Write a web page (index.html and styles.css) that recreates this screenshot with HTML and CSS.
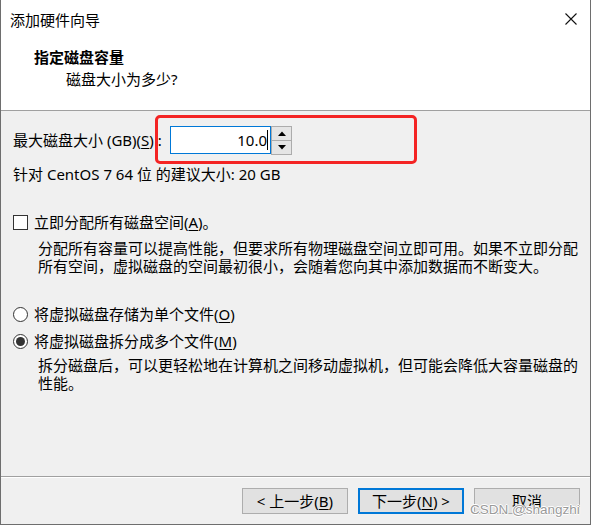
FILE: index.html
```html
<!DOCTYPE html>
<html lang="zh-CN">
<head>
<meta charset="utf-8">
<title>添加硬件向导</title>
<link rel="stylesheet" href="styles.css">
</head>
<body>
<div class="window">
  <div class="header">
    <div class="titlebar">
      <span class="title">添加硬件向导</span>
      <svg class="close" width="12" height="12" viewBox="0 0 12 12"><path d="M0.5 0.5 L11.5 11.5 M11.5 0.5 L0.5 11.5" stroke="#111" stroke-width="1.1" fill="none"/></svg>
    </div>
    <div class="heading">指定磁盘容量</div>
    <div class="subheading">磁盘大小为多少?</div>
  </div>

  <div class="content">
    <div class="size-row">
      <span class="size-label">最大磁盘大小 (GB)(<u>S</u>) :</span>
      <div class="spin-input">
        <span class="value">10.0</span><span class="caret"></span>
      </div>
      <div class="spinner">
        <div class="spin-btn"><svg width="8" height="5" viewBox="0 0 8 5"><path d="M0 5 L4 0.5 L8 5 Z" fill="#000"/></svg></div>
        <div class="spin-btn"><svg width="8" height="5" viewBox="0 0 8 5"><path d="M0 0 L4 4.5 L8 0 Z" fill="#000"/></svg></div>
      </div>
      <div class="highlight"></div>
    </div>

    <div class="recommend">针对 CentOS 7 64 位 的建议大小: 20 GB</div>

    <div class="option option-check">
      <span class="checkbox"></span>
      <span>立即分配所有磁盘空间(<u>A</u>)。</span>
    </div>
    <div class="desc desc-first">分配所有容量可以提高性能，但要求所有物理磁盘空间立即可用。如果不立即分配<br>所有空间，虚拟磁盘的空间最初很小，会随着您向其中添加数据而不断变大。</div>

    <div class="option option-radio1">
      <span class="radio"></span>
      <span>将虚拟磁盘存储为单个文件(<u>O</u>)</span>
    </div>
    <div class="option option-radio2">
      <span class="radio checked"></span>
      <span>将虚拟磁盘拆分成多个文件(<u>M</u>)</span>
    </div>
    <div class="desc desc-second">拆分磁盘后，可以更轻松地在计算机之间移动虚拟机，但可能会降低大容量磁盘的<br>性能。</div>
  </div>

  <div class="footer">
    <button class="btn">&lt; 上一步(<u>B</u>)</button>
    <button class="btn btn-default">下一步(<u>N</u>) &gt;</button>
    <button class="btn">取消</button>
    <span class="watermark">CSDN @shangzhi</span>
  </div>
</div>
</body>
</html>
```
FILE: styles.css
```css
* { box-sizing: border-box; }

html, body {
  margin: 0;
  padding: 0;
  background: #ffffff;
}

body {
  font-family: "Noto Sans", "Noto Sans CJK SC", sans-serif;
  font-size: 15px;
  color: #000;
}

u { text-decoration: underline; text-underline-offset: 2px; }

.window {
  width: 591px;
  height: 525px;
  border-left: 1px solid #6e6e6e;
  border-right: 1px solid #6e6e6e;
  border-bottom: 1px solid #6e6e6e;
  background: #f0f0f0;
  display: flex;
  flex-direction: column;
}

.header {
  height: 111px;
  background: #ffffff;
  border-bottom: 1px solid #a0a0a0;
  flex: none;
}

.titlebar {
  height: 39px;
  display: flex;
  align-items: center;
  justify-content: space-between;
  padding: 0 13px 0 9px;
  line-height: 20px;
}

.title { font-size: 15px; }

.close { display: block; margin-top: -1px; }

.heading {
  margin: 8px 0 0 33px;
  line-height: 20px;
  font-weight: bold;
}

.subheading {
  margin: 2px 0 0 65px;
  line-height: 20px;
}

.content {
  flex: 1;
  padding: 15px 0 0 12px;
}

.size-row {
  position: relative;
  display: flex;
  align-items: center;
  height: 28px;
}

.size-label {
  flex: none;
  width: 157px;
  line-height: 20px;
  white-space: nowrap;
}

.spin-input {
  flex: none;
  width: 101px;
  height: 28px;
  border: 1px solid #0078d7;
  background: #fff;
  display: flex;
  align-items: center;
  justify-content: flex-end;
  padding-right: 2px;
  line-height: 20px;
}

.caret {
  width: 1px;
  height: 20px;
  background: #000;
}

.spinner {
  flex: none;
  width: 21px;
  height: 29px;
  display: flex;
  flex-direction: column;
}

.spin-btn {
  flex: 1;
  border: 1px solid #acacac;
  background: #e5e5e5;
  display: flex;
  align-items: center;
  justify-content: center;
}

.spin-btn + .spin-btn { border-top: none; }

.highlight {
  position: absolute;
  left: 142px;
  top: -11px;
  width: 262px;
  height: 49px;
  border: 3px solid #f42424;
  border-radius: 5px;
  pointer-events: none;
}

.recommend {
  margin-top: 10px;
  line-height: 20px;
}

.option {
  display: flex;
  align-items: center;
  height: 20px;
  line-height: 20px;
  white-space: nowrap;
}

.option-check { margin-top: 28px; }
.option-radio1 { margin-top: 29px; }
.option-radio2 { margin-top: 7px; }

.checkbox {
  width: 15px;
  height: 15px;
  border: 1px solid #333;
  background: #fff;
  margin-right: 6px;
  flex: none;
}

.radio {
  width: 15px;
  height: 15px;
  border: 1px solid #333;
  border-radius: 50%;
  background: #fff;
  margin-right: 6px;
  flex: none;
  display: flex;
  align-items: center;
  justify-content: center;
}

.radio.checked::after {
  content: "";
  width: 9px;
  height: 9px;
  border-radius: 50%;
  background: #333;
}

.desc {
  padding-left: 25px;
  line-height: 18px;
  white-space: nowrap;
}

.desc-first { margin-top: 7px; }
.desc-second { margin-top: 5px; }

.footer {
  position: relative;
  height: 48px;
  flex: none;
  border-top: 1px solid #a0a0a0;
  box-shadow: inset 0 1px 0 #ffffff;
  display: flex;
  justify-content: flex-end;
  align-items: flex-start;
  gap: 10px;
  padding: 11px 10px 0 0;
}

.btn {
  width: 106px;
  height: 26px;
  margin: 0;
  padding: 0;
  border: 1px solid #adadad;
  background: #e1e1e1;
  font-family: "Noto Sans", "Noto Sans CJK SC", sans-serif;
  font-size: 15px;
  line-height: 20px;
  color: #000;
}

.btn-default {
  border: 2px solid #0078d7;
}

.watermark {
  position: absolute;
  left: 469px;
  top: 25px;
  font-family: "Liberation Sans", sans-serif;
  font-size: 13.5px;
  line-height: 16px;
  color: #9a9a9a;
  text-shadow: 0 0 1px #fff, 1px 0 0 #fff, -1px 0 0 #fff, 0 1px 0 #fff, 0 -1px 0 #fff;
  white-space: nowrap;
}
```
